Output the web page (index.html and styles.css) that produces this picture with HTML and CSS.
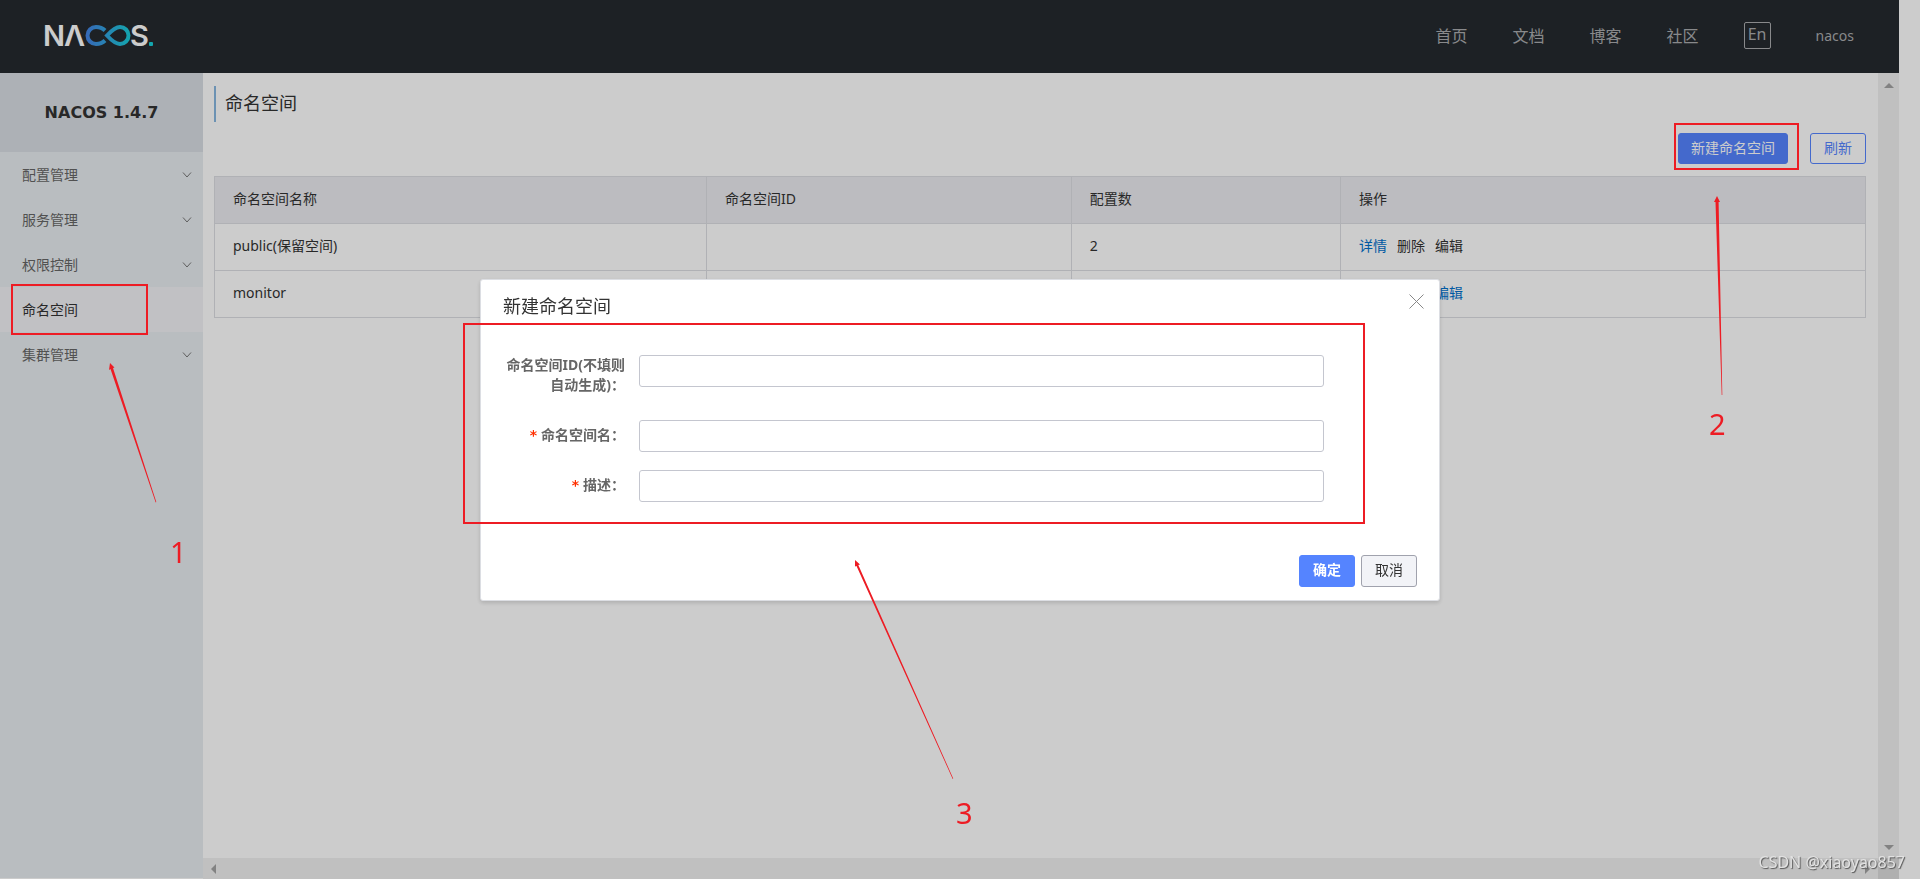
FILE: index.html
```html
<!DOCTYPE html>
<html lang="zh-CN">
<head>
<meta charset="utf-8">
<title>Nacos</title>
<link rel="stylesheet" href="styles.css">
</head>
<body>
<div class="app">
  <header class="header">
    <a class="logo" href="#" aria-label="Nacos">
      <svg width="112" height="28" viewBox="0 0 112 28">
        <defs>
          <linearGradient id="loop" gradientUnits="userSpaceOnUse" x1="41" y1="0" x2="86" y2="0">
            <stop offset="0" stop-color="#4583e6"/>
            <stop offset="1" stop-color="#18d0da"/>
          </linearGradient>
        </defs>
        <text class="logo-text" x="-2" y="25">N</text>
        <text class="logo-text" x="19" y="25">Λ</text>
        <path d="M60 9.500 C57 6.500 54.500 6 51 6 A8.500 8.500 0 0 0 51 23 C54.500 23 57 22.500 60 19.500" fill="none" stroke="url(#loop)" stroke-width="4"/>
        <path d="M62 14.500 C68 8 71 6 75 6 A8.500 8.500 0 0 1 75 23 C71 23 68 21 62 14.500 Z" fill="none" stroke="url(#loop)" stroke-width="4"/>
        <text class="logo-text" x="85" y="25">S</text>
        <rect x="104" y="21" width="4" height="4" rx="1" fill="#18d0da"/>
      </svg>
    </a>
    <nav class="topnav">
      <a href="#">首页</a>
      <a href="#">文档</a>
      <a href="#">博客</a>
      <a href="#">社区</a>
      <button class="lang" type="button">En</button>
      <a class="user" href="#">nacos</a>
    </nav>
  </header>
  <div class="body">
    <aside class="sidebar">
      <h1 class="product">NACOS 1.4.7</h1>
      <nav class="menu">
        <a class="item" href="#">配置管理<svg class="chevron" viewBox="0 0 10 6"><path d="M1 .5 5 5 9 .5"/></svg></a>
        <a class="item" href="#">服务管理<svg class="chevron" viewBox="0 0 10 6"><path d="M1 .5 5 5 9 .5"/></svg></a>
        <a class="item" href="#">权限控制<svg class="chevron" viewBox="0 0 10 6"><path d="M1 .5 5 5 9 .5"/></svg></a>
        <a class="item active" href="#">命名空间</a>
        <a class="item" href="#">集群管理<svg class="chevron" viewBox="0 0 10 6"><path d="M1 .5 5 5 9 .5"/></svg></a>
      </nav>
    </aside>
    <div class="scroller">
      <main class="content">
        <h2 class="page-title">命名空间</h2>
        <div class="toolbar">
          <button class="btn primary" type="button">新建命名空间</button>
          <button class="btn outline" type="button">刷新</button>
        </div>
        <table class="table">
          <colgroup><col class="c-name"><col class="c-id"><col class="c-count"><col></colgroup>
          <thead>
            <tr><th>命名空间名称</th><th>命名空间ID</th><th>配置数</th><th>操作</th></tr>
          </thead>
          <tbody>
            <tr><td>public(保留空间)</td><td></td><td>2</td><td><span class="ops"><a href="#">详情</a><span>删除</span><span>编辑</span></span></td></tr>
            <tr><td>monitor</td><td></td><td></td><td><span class="ops"><a href="#">详情</a><a href="#">删除</a><a href="#">编辑</a></span></td></tr>
          </tbody>
        </table>
      </main>
      <div class="track vertical"><i class="arrow up"></i><i class="arrow down"></i></div>
      <div class="track horizontal"><i class="arrow left"></i><i class="arrow right"></i></div>
      <div class="corner"></div>
    </div>
  </div>
</div>

<div class="overlay">
  <section class="dialog" role="dialog" aria-labelledby="dlg-title">
    <div class="dialog-head">
      <h2 id="dlg-title">新建命名空间</h2>
      <button class="close" type="button" aria-label="关闭"><svg width="15" height="15" viewBox="0 0 15 15"><path d="M.5.5l14 14M14.500.5l-14 14"/></svg></button>
    </div>
    <form class="form">
      <div class="row tall">
        <label for="ns-id">命名空间ID(不填则自动生成)：</label>
        <input id="ns-id" type="text">
      </div>
      <div class="row">
        <label for="ns-name"><b class="req">*</b>命名空间名：</label>
        <input id="ns-name" type="text">
      </div>
      <div class="row">
        <label for="ns-desc"><b class="req">*</b>描述：</label>
        <input id="ns-desc" type="text">
      </div>
    </form>
    <div class="dialog-foot">
      <button class="btn primary strong" type="button">确定</button>
      <button class="btn plain" type="button">取消</button>
    </div>
  </section>
</div>

<svg class="notes" width="1920" height="879" viewBox="0 0 1920 879">
  <g class="frame">
    <rect x="12" y="285" width="135" height="49"/>
    <rect x="1675" y="124" width="123" height="45"/>
    <rect x="464" y="324" width="900" height="199"/>
  </g>
  <g class="pointer">
    <path d="M110 363 L114.500 367.500 L113 368 L156.300 502 L155.700 502.500 L110.500 369 L109 370 Z"/>
    <path d="M1717 196 L1720 202 L1718.600 202 L1722.300 395 L1721.700 395 L1715.500 202 L1714 202 Z"/>
    <path d="M855 560 L860 564.500 L858.300 565 L953.200 778.500 L952.700 779 L856.500 566 L855 566.500 Z"/>
  </g>
  <g class="num">
    <text x="170" y="563">1</text>
    <text x="1709" y="435">2</text>
    <text x="956" y="824">3</text>
  </g>
</svg>
<div class="watermark">CSDN @xiaoyao857</div>
</body>
</html>
```
FILE: styles.css
```css
* { box-sizing: border-box; }

body {
  margin: 0;
  height: 100vh;
  overflow: hidden;
  background: #fff;
  color: #333;
  font: 14px/20px "Noto Sans", "Noto Sans CJK SC", sans-serif;
}

a { color: inherit; text-decoration: none; }
button, input { font: inherit; }
h1, h2 { margin: 0; }

.app {
  display: flex;
  flex-direction: column;
  height: 100%;
  margin-right: 21px;
}

.header {
  display: flex;
  flex: none;
  align-items: center;
  justify-content: space-between;
  height: 73px;
  padding: 0 45px 2px;
  background: #252a2f;
}

.logo { display: flex; padding-bottom: 2px; }
.logo svg { overflow: visible; }
.logo-text { fill: #fff; font: 600 29px Inter, sans-serif; }

.topnav {
  display: flex;
  align-items: center;
  gap: 45px;
  color: #aaacae;
  font-size: 16px;
}
.lang {
  width: 27px;
  height: 27px;
  padding: 0 0 2px;
  border: 1px solid #aaacae;
  border-radius: 2px;
  background: none;
  color: inherit;
  line-height: 23px;
}
.user { font-size: 14px; }

.body { display: flex; flex: 1; min-height: 0; }

.sidebar { flex: none; width: 203px; margin-bottom: 1px; background: #e8edf0; }
.product {
  background: #d9dee4;
  font: 700 16px/79px "DejaVu Sans", sans-serif;
  text-align: center;
}
.item {
  display: flex;
  align-items: center;
  justify-content: space-between;
  height: 45px;
  padding: 0 11px 0 22px;
  color: #666;
}
.item.active { background: #f2f2f6; color: #333; }
.chevron { width: 10px; height: 6px; fill: none; stroke: #777; }

.scroller {
  display: grid;
  flex: 1;
  grid-template: minmax(0, 1fr) 21px / minmax(0, 1fr) 21px;
}
.content { padding: 13px 12px 0 11px; }
.page-title {
  padding: 0 0 2px 9px;
  border-left: 2px solid #88b7e0;
  font-size: 18px;
  font-weight: 400;
  line-height: 34px;
}
.toolbar {
  display: flex;
  justify-content: flex-end;
  gap: 22px;
  padding: 11px 0 12px;
}

.btn {
  min-width: 56px;
  height: 31px;
  padding: 0 12px 2px;
  border: 1px solid #5584ff;
  border-radius: 3px;
}
.btn.primary { background: #5584ff; color: #fff; }
.btn.outline { background: none; color: #5584ff; }
.btn.plain { border-color: #a0a2ad; background: #f2f3f7; color: #333; }
.btn.strong { font-weight: 700; }

.table {
  width: 100%;
  border-collapse: collapse;
  table-layout: fixed;
}
.table th, .table td {
  height: 47px;
  padding: 0 18px 2px;
  border: 1px solid #dcdee3;
  font-weight: 400;
  text-align: left;
}
.table th { background: #ebecf0; }
.c-name { width: 29.8%; }
.c-id { width: 22.1%; }
.c-count { width: 16.3%; }
.ops { display: flex; gap: 10px; }
.ops a { color: #0070cc; }

.track { display: flex; align-items: center; justify-content: space-between; background: #f1f1f1; }
.vertical { flex-direction: column; padding: 10px 0 8px; }
.horizontal { padding: 0 8px; }
.corner { background: #dcdcdc; }
.arrow { border: 5px solid transparent; }
.up { border-top: 0; border-bottom-color: #a3a3a3; }
.down { border-bottom: 0; border-top-color: #a3a3a3; }
.left { border-left: 0; border-right-color: #a3a3a3; }
.right { border-right: 0; border-left-color: #a3a3a3; }

.overlay {
  position: fixed;
  inset: 0;
  display: flex;
  align-items: center;
  justify-content: center;
  background: rgba(0, 0, 0, .2);
}
.dialog {
  width: 50%;
  border: 1px solid #dcdee3;
  border-radius: 3px;
  background: #fff;
  box-shadow: 0 2px 4px rgba(0, 0, 0, .15);
}
.dialog-head {
  display: flex;
  align-items: flex-start;
  justify-content: space-between;
  padding: 13px 15px 0 22px;
}
.dialog-head h2 { font-size: 18px; font-weight: 400; line-height: 26px; }
.close { display: flex; padding: 1px 0 0; border: 0; background: none; }
.close svg { fill: none; stroke: #888; }

.form { padding: 36px 115px 0 22px; }
.row {
  display: grid;
  grid-template-columns: 122px 1fr;
  align-items: start;
  gap: 14px;
  min-height: 50px;
}
.row label {
  padding-top: 5px;
  color: #666;
  font-weight: 700;
  text-align: right;
}
.row.tall { min-height: 65px; }
.row.tall label { padding-top: 0; }
.row input {
  width: 100%;
  height: 32px;
  border: 1px solid #c4c6cf;
  border-radius: 3px;
  background: #fff;
}
.req { margin-right: 4px; color: #ff3000; font-family: "DejaVu Sans", sans-serif; }

.dialog-foot {
  display: flex;
  justify-content: flex-end;
  gap: 6px;
  padding: 35px 22px 13px;
}
.dialog-foot .btn { height: 32px; }

.notes {
  position: absolute;
  top: 0;
  left: 0;
  pointer-events: none;
}
.frame { fill: none; stroke: #ed1c24; stroke-width: 2; }
.pointer, .num { fill: #ed1c24; }
.num { font-size: 29px; }

.watermark {
  position: absolute;
  right: 15px;
  bottom: 7px;
  color: #e2e2e2;
  font: 16px/20px "Noto Sans", sans-serif;
  text-shadow: 1px 1px 1px #555;
}
```
